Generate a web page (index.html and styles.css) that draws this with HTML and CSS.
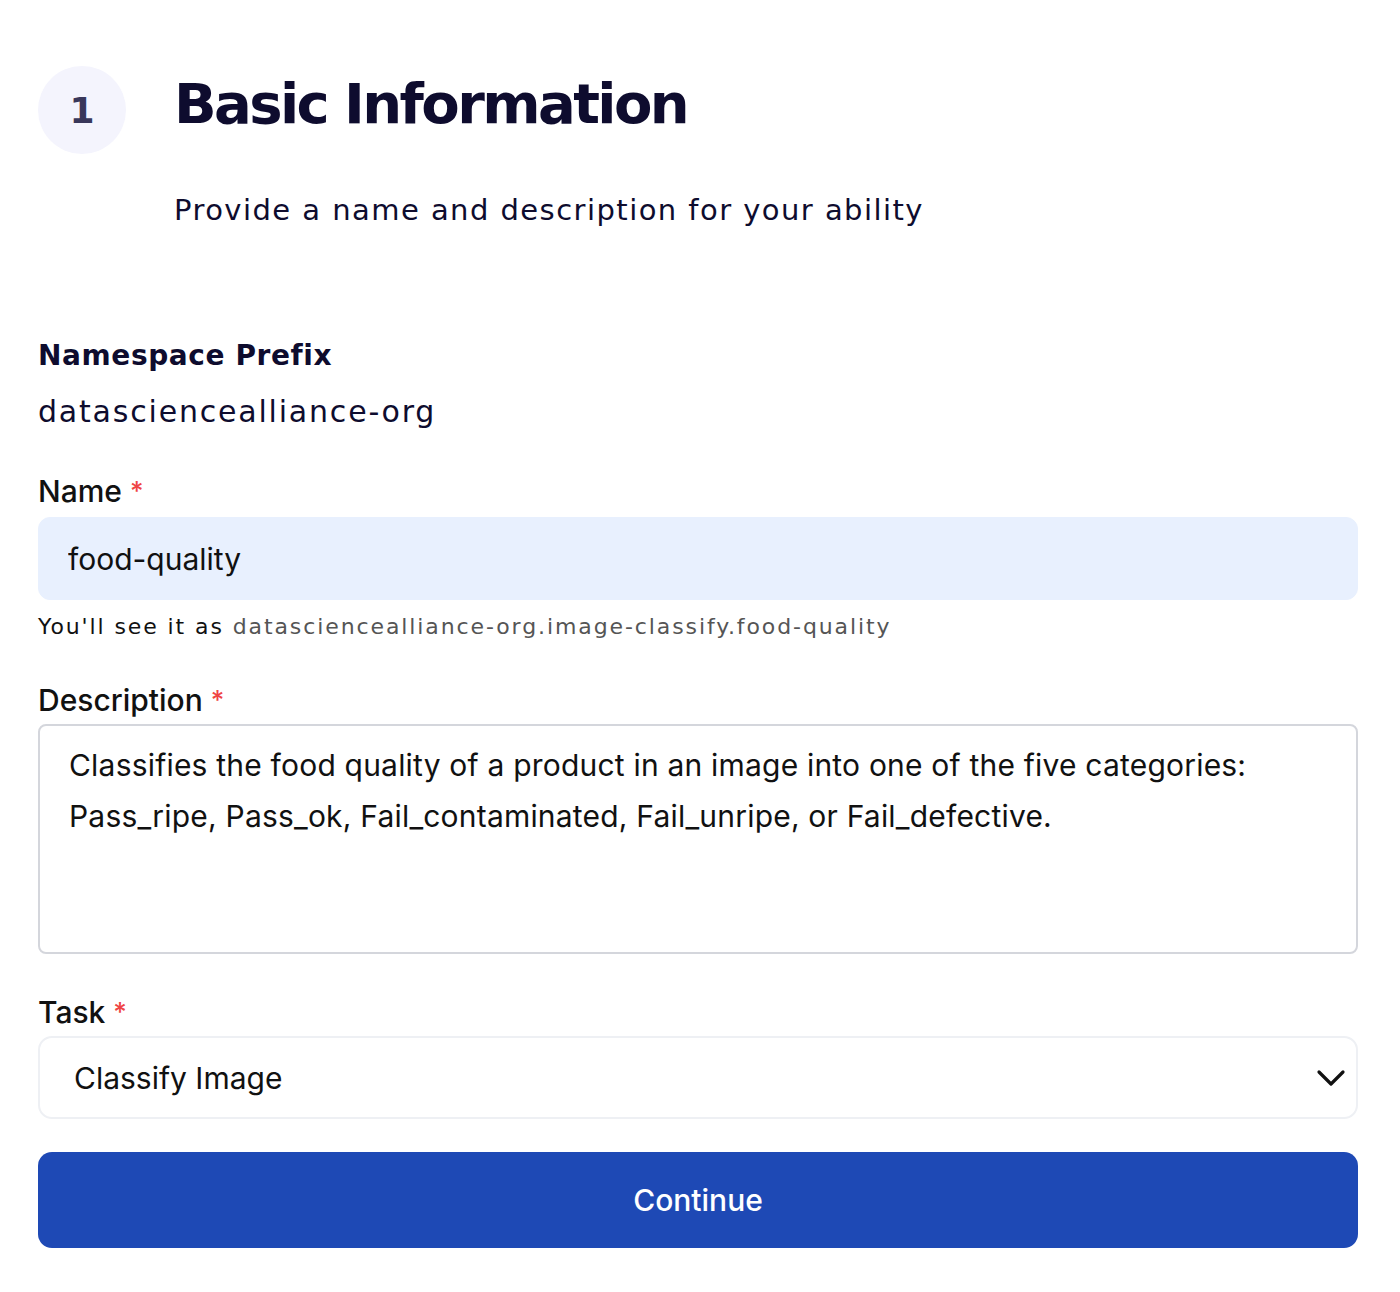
FILE: index.html
```html
<!DOCTYPE html>
<html lang="en">
<head>
    <meta charset="UTF-8">
    <meta name="viewport" content="width=device-width, initial-scale=1.0">
    <title>Basic Information</title>
    <link rel="stylesheet" href="styles.css">
</head>
<body>
    <main class="page">
        <header class="step-head">
            <div class="step-num">1</div>
            <div class="step-text">
                <h1>Basic Information</h1>
                <p>Provide a name and description for your ability</p>
            </div>
        </header>

        <form class="ability-form" onsubmit="return false;">
            <div class="prefix">
                <h2>Namespace Prefix</h2>
                <p>datasciencealliance-org</p>
            </div>

            <div class="field field-name">
                <label for="name">Name <span class="req">*</span></label>
                <input type="text" id="name" class="name-input" value="food-quality">
                <p class="hint">You'll see it as <span>datasciencealliance-org.image-classify.food-quality</span></p>
            </div>

            <div class="field">
                <label for="description">Description <span class="req">*</span></label>
                <textarea id="description" class="desc-input">Classifies the food quality of a product in an image into one of the five categories: Pass_ripe, Pass_ok, Fail_contaminated, Fail_unripe, or Fail_defective.</textarea>
            </div>

            <div class="field">
                <label for="task">Task <span class="req">*</span></label>
                <div class="select-wrap">
                    <select id="task" class="task-select">
                        <option>Classify Image</option>
                    </select>
                    <svg class="chevron" width="30" height="18" viewBox="0 0 30 18" fill="none">
                        <path d="M3 3l12 12L27 3" stroke="#111" stroke-width="3.2" stroke-linecap="round" stroke-linejoin="round"/>
                    </svg>
                </div>
            </div>

            <button type="submit" class="continue-btn">Continue</button>
        </form>
    </main>
</body>
</html>
```

FILE: styles.css
```css
body {
    margin: 0;
    background-color: #fff;
    font-family: Inter, "Liberation Sans", sans-serif;
    color: #111;
}

.page {
    padding: 66px 42px 40px 38px;
}

/* header */
.step-head {
    display: flex;
    align-items: flex-start;
    gap: 48px;
}

.step-num {
    flex: none;
    width: 88px;
    height: 88px;
    border-radius: 50%;
    background-color: #f4f4fd;
    color: #39375a;
    font-family: "DejaVu Sans", sans-serif;
    font-weight: bold;
    font-size: 36px;
    display: flex;
    align-items: center;
    justify-content: center;
}

.step-text h1 {
    margin: 0;
    font-family: "DejaVu Sans", sans-serif;
    font-weight: 800;
    font-size: 56px;
    line-height: 76px;
    letter-spacing: -2.6px;
    color: #0e0c2e;
}

.step-text p {
    margin: 48px 0 0;
    font-family: "DejaVu Sans", sans-serif;
    font-size: 29px;
    line-height: 40px;
    letter-spacing: 1.45px;
    color: #0e0c2e;
}

/* form */
.ability-form {
    margin-top: 106px;
}

.prefix {
    margin-bottom: 39px;
}

.prefix h2 {
    margin: 0;
    font-family: "DejaVu Sans", sans-serif;
    font-weight: bold;
    font-size: 28px;
    line-height: 40px;
    letter-spacing: 0.6px;
    color: #0e0c2e;
}

.prefix p {
    margin: 16px 0 0;
    font-family: "DejaVu Sans", sans-serif;
    font-size: 30px;
    line-height: 40px;
    letter-spacing: 1.8px;
    color: #0e0c2e;
}

.field + .field {
    margin-top: 38px;
}

.field label {
    display: block;
    font-size: 30px;
    font-weight: 500;
    line-height: 40px;
    margin-bottom: 4px;
}

.field-name label {
    margin-bottom: 6px;
}

.req {
    color: #ef4444;
    font-size: 26px;
    vertical-align: top;
}

.name-input,
.desc-input,
.task-select {
    display: block;
    width: 100%;
    box-sizing: border-box;
    font-family: Inter, "Liberation Sans", sans-serif;
    font-size: 30px;
    color: #111;
    outline: none;
}

.name-input {
    height: 83px;
    padding: 0 29px;
    border: 1px solid #e8f0fe;
    border-radius: 12px;
    background-color: #e8f0fe;
}

.hint {
    margin: 12px 0 0;
    font-family: "DejaVu Sans", sans-serif;
    font-size: 22px;
    line-height: 30px;
    letter-spacing: 1.9px;
    color: #111;
}

.hint span {
    color: #555;
}

.desc-input {
    height: 230px;
    padding: 14px 29px;
    border: 2px solid #d4d6dc;
    border-radius: 8px;
    line-height: 51px;
    letter-spacing: 0.2px;
    resize: none;
    background-color: #fff;
}

.select-wrap {
    position: relative;
}

.task-select {
    height: 83px;
    padding: 0 34px;
    border: 2px solid #eef0f4;
    border-radius: 14px;
    background-color: #fff;
    appearance: none;
    -webkit-appearance: none;
}

.chevron {
    position: absolute;
    right: 12px;
    top: 33px;
}

.continue-btn {
    display: block;
    width: 100%;
    height: 96px;
    margin-top: 33px;
    border: none;
    border-radius: 14px;
    background-color: #1e49b5;
    color: #fff;
    font-family: Inter, "Liberation Sans", sans-serif;
    font-size: 30px;
    font-weight: 500;
    cursor: pointer;
}
```
